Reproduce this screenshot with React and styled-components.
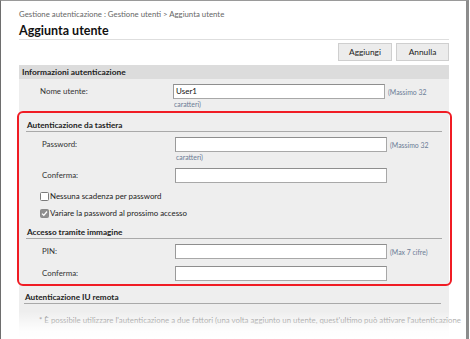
import React from "react";
import styled, { createGlobalStyle } from "styled-components";

const Global = createGlobalStyle`
  html, body { margin: 0; padding: 0; background: #fff; }
  body { font-family: Lato, "Open Sans", sans-serif; }
  * { box-sizing: border-box; }
`;

const Frame = styled.div`
  position: relative;
  width: 469px;
  height: 339px;
  overflow: hidden;
  border-top: 1px solid #9a9a9a;
  border-left: 1px solid #6e6e6e;
  border-right: 3px solid #8c8c8c;
  background: #fff;
`;

const Page = styled.div`
  width: 430px;
  margin-left: 18px;
`;

const Breadcrumb = styled.div`
  padding-top: 7px;
  font-size: 7.8px;
  line-height: 12px;
  color: #666;
  white-space: nowrap;
`;

const Title = styled.h1`
  margin: 4px 0 0;
  padding-bottom: 1px;
  font-size: 12.5px;
  line-height: 14px;
  font-weight: 700;
  color: #111;
  border-bottom: 1px solid #dedede;
`;

const Toolbar = styled.div`
  display: flex;
  justify-content: flex-end;
  gap: 4px;
  margin-top: 3px;
`;

const Button = styled.button`
  width: ${(p) => p.$w}px;
  height: 18px;
  padding: 0;
  font-family: inherit;
  font-size: 8.3px;
  color: #222;
  background: #ececec;
  border: 1px solid #cfcfcf;
`;

const SectionHeader = styled.div`
  margin-top: 4px;
  height: 14px;
  padding-left: 3px;
  background: #dcdcdc;
  font-size: 8.4px;
  line-height: 14px;
  font-weight: 700;
  color: #222;
`;

const Panel = styled.div`
  background: #eeeeee;
  padding-top: 5px;
  height: 265px;
`;

const Row = styled.div`
  display: grid;
  grid-template-columns: 133px auto;
  padding-left: 21px;
  margin-top: ${(p) => p.$mt || 0}px;
`;

const Label = styled.div`
  font-size: 7.9px;
  line-height: 15px;
  color: #333;
`;

const Field = styled.div`
  display: flex;
  flex-direction: column;
`;

const InputLine = styled.div`
  display: flex;
  align-items: center;
  gap: 3px;
`;

const Input = styled.div`
  width: 212px;
  height: 15px;
  background: #fff;
  border: 1px solid #a8a8a8;
  border-top-color: #8e8e8e;
  border-left-color: #9a9a9a;
  padding-left: 2px;
  font-size: 8px;
  line-height: 13px;
  color: #111;
`;

const Note = styled.span`
  font-size: 6.9px;
  line-height: 10px;
  color: #6c7c96;
  white-space: nowrap;
`;

const SubNote = styled(Note)`
  display: block;
  padding-left: 1px;
`;

const Highlight = styled.div`
  margin: 2px -3px 0 -2px;
  padding: 0 0 3px 2px;
  border: 2px solid #f01c24;
  border-radius: 6px;
`;

const SubHeader = styled.div`
  margin: 0 8px 0 5px;
  padding: ${(p) => p.$pt}px 0 1px 1px;
  font-size: 8.2px;
  line-height: 10px;
  font-weight: 700;
  color: #222;
  border-bottom: 1px solid #a9a9a9;
`;

const CheckRow = styled.label`
  display: flex;
  align-items: center;
  gap: 1px;
  padding-left: 19px;
  margin-top: ${(p) => p.$mt}px;
  font-size: 7.9px;
  line-height: 12px;
  color: #222;
`;

const Box = styled.span`
  display: inline-flex;
  align-items: center;
  justify-content: center;
  width: 9px;
  height: 9px;
  border-radius: 1.5px;
  border: 1px solid ${(p) => (p.$on ? "#8a8a8a" : "#7a7a7a")};
  background: ${(p) => (p.$on ? "#8f8f8f" : "#fff")};
`;

const Remark = styled.div`
  padding: 11px 0 0 20px;
  font-size: 7.85px;
  line-height: 10px;
  color: #777;
  white-space: nowrap;
`;

const Fade = styled.div`
  position: absolute;
  left: 0;
  right: 0;
  bottom: 0;
  height: 28px;
  background: linear-gradient(
    to bottom,
    rgba(255, 255, 255, 0) 0%,
    rgba(255, 255, 255, 0.45) 35%,
    rgba(255, 255, 255, 0.92) 72%,
    #fff 100%
  );
  pointer-events: none;
`;

const Check = () => (
  <svg width="7" height="7" viewBox="0 0 7 7">
    <path d="M1 3.6 L2.8 5.3 L6 1.5" fill="none" stroke="#fff" strokeWidth="1.3" />
  </svg>
);

const FieldRow = ({ label, value, note, sub, mt }) => (
  <Row $mt={mt}>
    <Label>{label}</Label>
    <Field>
      <InputLine>
        <Input>{value}</Input>
        {note && <Note>{note}</Note>}
      </InputLine>
      {sub && <SubNote>{sub}</SubNote>}
    </Field>
  </Row>
);

export default function App() {
  return (
    <>
      <Global />
      <Frame>
        <Page>
          <Breadcrumb>Gestione autenticazione : Gestione utenti &gt; Aggiunta utente</Breadcrumb>
          <Title>Aggiunta utente</Title>
          <Toolbar>
            <Button $w={54}>Aggiungi</Button>
            <Button $w={53}>Annulla</Button>
          </Toolbar>
          <SectionHeader>Informazioni autenticazione</SectionHeader>
          <Panel>
            <FieldRow label="Nome utente:" value="User1" note="(Massimo 32" sub="caratteri)" />
            <Highlight>
              <SubHeader $pt={7}>Autenticazione da tastiera</SubHeader>
              <FieldRow label="Password:" note="(Massimo 32" sub="caratteri)" mt={5} />
              <FieldRow label="Conferma:" mt={6} />
              <CheckRow $mt={7}>
                <Box />
                Nessuna scadenza per password
              </CheckRow>
              <CheckRow $mt={5}>
                <Box $on>
                  <Check />
                </Box>
                Variare la password al prossimo accesso
              </CheckRow>
              <SubHeader $pt={8}>Accesso tramite immagine</SubHeader>
              <FieldRow label="PIN:" note="(Max 7 cifre)" mt={5} />
              <FieldRow label="Conferma:" mt={7} />
            </Highlight>
            <SubHeader $pt={6}>Autenticazione IU remota</SubHeader>
            <Remark>
              * È possibile utilizzare l'autenticazione a due fattori (una volta aggiunto un utente, quest'ultimo può attivare l'autenticazione
            </Remark>
          </Panel>
        </Page>
        <Fade />
      </Frame>
    </>
  );
}
